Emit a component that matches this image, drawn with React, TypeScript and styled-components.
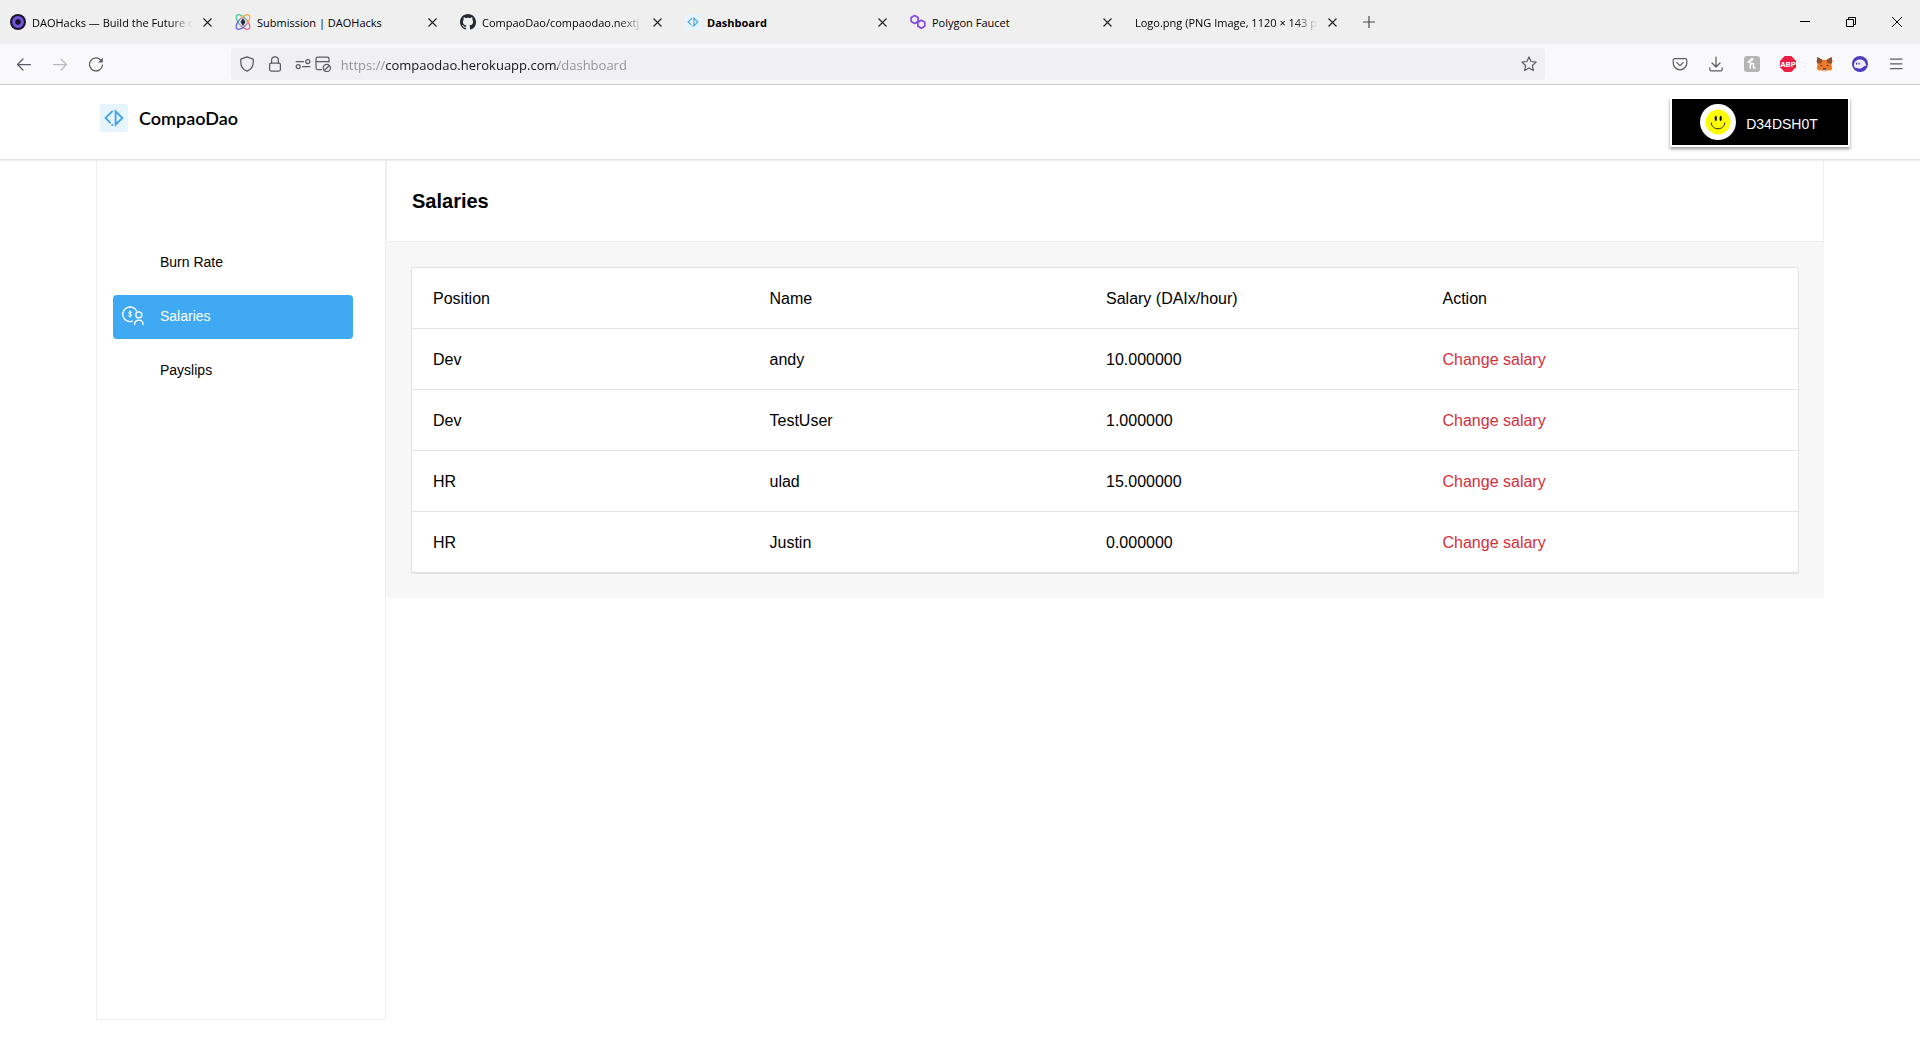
import React from "react";
import styled, { createGlobalStyle } from "styled-components";

const GlobalStyle = createGlobalStyle`
  *, *::before, *::after { box-sizing: border-box; }
  body {
    margin: 0;
    background: #fff;
    color: #000;
    font-family: "Liberation Sans", Arial, sans-serif;
  }
  button { font: inherit; color: inherit; background: none; border: 0; padding: 0; cursor: pointer; }
  a { color: inherit; text-decoration: none; }
  svg { display: block; flex: none; }
`;

const uiFont = `"Open Sans", "Noto Sans", sans-serif`;

/* ---------- Browser chrome ---------- */

const Screen = styled.div`
  display: flex;
  flex-direction: column;
  min-height: 100vh;
`;

const TabStrip = styled.div`
  display: flex;
  align-items: stretch;
  height: 44px;
  background: #efefef;
  font-family: ${uiFont};
`;

const Tab = styled.div`
  display: flex;
  align-items: center;
  gap: 6px;
  width: 225px;
  padding: 0 10px;
`;

const TabLabel = styled.span<{ $active?: boolean; $faded?: boolean }>`
  flex: 1;
  min-width: 0;
  padding-top: 2px;
  white-space: nowrap;
  font-size: 11px;
  line-height: 18px;
  font-weight: ${(p) => (p.$active ? 700 : 400)};
  mask-image: ${(p) =>
    p.$faded ? "linear-gradient(to left, transparent, #000 24px)" : "none"};
`;

const TabClose = styled.button`
  display: grid;
  place-items: center;
  width: 16px;
  height: 24px;
`;

const NewTab = styled.button`
  display: grid;
  place-items: center;
  width: 38px;
`;

const WindowControls = styled.div`
  display: flex;
  margin-left: auto;
`;

const WindowButton = styled.button`
  display: grid;
  place-items: center;
  width: 46px;
`;

const Toolbar = styled.div`
  display: flex;
  align-items: center;
  height: 41px;
  padding: 0 6px;
  background: #f9f9fb;
  border-bottom: 1px solid #cccccc;
  font-family: ${uiFont};
`;

const ToolButton = styled.button<{ $dim?: boolean }>`
  display: grid;
  place-items: center;
  width: 36px;
  height: 32px;
  color: #5b5b66;
  opacity: ${(p) => (p.$dim ? 0.4 : 1)};
`;

const Spacer = styled.div`
  flex: 9;
`;

const UrlBar = styled.form`
  display: flex;
  align-items: center;
  flex: 100;
  height: 32px;
  padding: 0 8px;
  border-radius: 4px;
  background: #f0f0f4;
  color: #5b5b66;
`;

const UrlIcons = styled.div`
  display: flex;
  align-items: center;
  gap: 12px;
  padding-right: 10px;
`;

const IconPair = styled.div`
  display: flex;
  gap: 4px;
`;

const UrlInput = styled.input`
  flex: 1;
  min-width: 0;
  border: 0;
  padding: 2px 0 0;
  outline: 0;
  font-family: ${uiFont};
  font-size: 13px;
  line-height: 20px;
  color: transparent;
  background: linear-gradient(to right, #8f8f98 44px, #15141a 44px 217px, #8f8f98 217px);
  background-clip: text;
  -webkit-background-clip: text;
`;

/* ---------- Site ---------- */

const SiteHeader = styled.header`
  display: flex;
  align-items: center;
  justify-content: space-between;
  height: 75px;
  padding: 0 70px 0 100px;
  border-bottom: 1px solid #e2e2e2;
  box-shadow: 0 1px 1px #f0f0f0;
`;

const Brand = styled.a`
  display: flex;
  align-items: center;
  gap: 11px;
  align-self: flex-start;
  padding-top: 19px;
  font-family: Lato, sans-serif;
  font-size: 18px;
  line-height: 28px;
  font-weight: 600;
`;

const UserButton = styled.button`
  display: flex;
  align-items: center;
  justify-content: center;
  gap: 10px;
  width: 180px;
  height: 50px;
  padding-right: 2px;
  border: 2px solid #fff;
  background: #000;
  color: #fff;
  font-size: 14px;
  line-height: 20px;
  box-shadow: 0 2px 3px rgba(0, 0, 0, 0.4);
`;

const UserName = styled.span`
  padding-top: 4px;
`;

const Layout = styled.div`
  display: flex;
  align-items: flex-start;
  width: 90%;
  margin: 0 auto;
`;

const Sidebar = styled.nav`
  display: flex;
  flex-direction: column;
  gap: 10px;
  width: 290px;
  min-height: calc(100vh - 180px);
  padding: 81px 32px 0 16px;
  border: 1px solid #eeeeee;
  border-top: 0;
`;

const NavItem = styled.a<{ $active?: boolean }>`
  display: grid;
  grid-template-columns: 22px 1fr;
  align-items: center;
  gap: 16px;
  height: 44px;
  padding: 0 0 2px 9px;
  border-radius: 4px;
  font-size: 14px;
  line-height: 20px;
  color: ${(p) => (p.$active ? "#fff" : "#000")};
  background: ${(p) => (p.$active ? "#40a9f3" : "transparent")};
`;

const NavIcon = styled.span`
  height: 20px;
`;

const Content = styled.main`
  flex: 1;
  min-width: 0;
`;

const TitleBar = styled.div`
  height: 82px;
  padding: 29px 25px 0;
  border: 1px solid #eeeeee;
  border-top: 0;
`;

const Title = styled.h1`
  margin: 0;
  font-size: 20px;
  line-height: 24px;
  font-weight: 700;
`;

const Panel = styled.section`
  padding: 25px;
  background: #f7f7f7;
`;

const Table = styled.table`
  display: block;
  border: 1px solid #e2e2e2;
  border-radius: 3px;
  background: #fff;
  box-shadow: 0 1px 0 #e2e2e2;
  font-size: 16px;
  line-height: 20px;
`;

const TableGroup = styled.tbody`
  display: block;
`;

const Row = styled.tr`
  display: grid;
  grid-template-columns: repeat(4, 1fr);
  padding: 21px 19px 19px 21px;
  & + &, tbody & { border-top: 1px solid #e2e2e2; }
`;

const HeadCell = styled.th`
  padding: 0;
  font-weight: 400;
  text-align: left;
`;

const Cell = styled.td`
  padding: 0;
`;

const ActionButton = styled.button`
  color: #d32f3a;
`;

/* ---------- Drawings ---------- */

const DaoHacksIcon = () => (
  <svg width="16" height="16" viewBox="0 0 16 16">
    <circle cx="8" cy="8" r="8" fill="#1b1530" />
    <circle cx="8" cy="8" r="4.3" fill="none" stroke="#6f55d9" strokeWidth="3.2" />
    <circle cx="8" cy="8" r="2.4" fill="#17102b" />
  </svg>
);

const EthGlobalIcon = () => (
  <svg width="16" height="16" viewBox="0 0 16 16" fill="none" strokeWidth="1.3">
    <circle cx="8" cy="8" r="5.2" fill="#dbe8f4" />
    <ellipse cx="8" cy="8" rx="4.200" ry="9" transform="rotate(-42 8 8)" stroke="url(#orbitA)" />
    <ellipse cx="8" cy="8" rx="4.200" ry="9" transform="rotate(42 8 8)" stroke="url(#orbitB)" />
    <path d="M8 4 10.500 8 8 12 5.500 8z" fill="#252b45" />
    <defs>
      <linearGradient id="orbitA" gradientUnits="userSpaceOnUse" x1="8" y1="0" x2="8" y2="16">
        <stop offset="0.3" stopColor="#52c79b" />
        <stop offset="0.7" stopColor="#f0629b" />
      </linearGradient>
      <linearGradient id="orbitB" gradientUnits="userSpaceOnUse" x1="8" y1="0" x2="8" y2="16">
        <stop offset="0.3" stopColor="#f5a742" />
        <stop offset="0.7" stopColor="#5969e6" />
      </linearGradient>
    </defs>
  </svg>
);

const GithubIcon = () => (
  <svg width="16" height="16" viewBox="0 0 16 16" fill="#24292f">
    <path d="M8 0C3.580 0 0 3.580 0 8c0 3.540 2.290 6.530 5.470 7.590.4.070.55-.17.55-.38 0-.19-.01-.82-.01-1.490-2.010.37-2.530-.49-2.690-.94-.09-.23-.48-.94-.82-1.130-.28-.15-.68-.52-.01-.53.63-.01 1.080.58 1.230.82.72 1.210 1.870.87 2.330.66.070-.52.28-.87.51-1.070-1.780-.2-3.640-.89-3.640-3.950 0-.87.31-1.590.82-2.150-.08-.2-.36-1.020.08-2.120 0 0 .67-.21 2.200.82.64-.18 1.320-.27 2-.27s1.360.09 2 .27c1.530-1.040 2.200-.82 2.200-.82.44 1.100.16 1.920.08 2.120.51.56.82 1.270.82 2.150 0 3.070-1.870 3.750-3.650 3.950.29.25.54.73.54 1.480 0 1.070-.01 1.930-.01 2.200 0 .21.15.46.55.38A8.010 8.010 0 0 0 16 8c0-4.420-3.580-8-8-8z" />
  </svg>
);

const BrandIcon = ({ size }: { size: number }) => (
  <svg width={size} height={size} viewBox="0 0 28 28" fill="none" stroke="#45a3ea" strokeWidth="1.900">
    <rect width="28" height="28" rx="2.500" fill="#e6f4fe" stroke="none" />
    <path d="M12.700 6.800 5.500 14l5.100 5.100" />
    <path d="M15.600 7.300v13.400L22.400 14z" />
    <path d="M11.400 21h1.800" />
  </svg>
);

const PolygonIcon = () => (
  <svg width="16" height="16" viewBox="0 0 16 16" fill="none" stroke="#8247e5" strokeWidth="1.700" strokeLinejoin="round">
    <path d="M8 7.700 4.700 9.500 1.200 7.500v-4l3.500-2 3.400 2v3.200l2 1.100" />
    <path d="M6.200 8.500 7.900 7.900l3.400-1.600 3.500 2v4l-3.500 2-3.400-2V9" />
  </svg>
);

const CloseIcon = () => (
  <svg width="9" height="9" viewBox="0 0 9 9" stroke="#222" strokeWidth="1.100">
    <path d="M.5.5l8 8M8.500.5l-8 8" />
  </svg>
);

const PlusIcon = () => (
  <svg width="12" height="12" viewBox="0 0 12 12" stroke="#4a4a4a" strokeWidth="1.200">
    <path d="M6 0v12M0 6h12" />
  </svg>
);

const MinimizeIcon = () => (
  <svg width="10" height="10" viewBox="0 0 10 10" stroke="#000"><path d="M0 4.500h10" /></svg>
);

const RestoreIcon = () => (
  <svg width="10" height="10" viewBox="0 0 10 10" stroke="#000" fill="none">
    <path d="M.5 2.500h7v7h-7z M2.500 2.500v-2h7v7h-2" />
  </svg>
);

const WindowCloseIcon = () => (
  <svg width="10" height="10" viewBox="0 0 10 10" stroke="#000"><path d="M0 0l10 10M10 0L0 10" /></svg>
);

const Stroke = ({ children }: { children: React.ReactNode }) => (
  <svg width="16" height="16" viewBox="0 0 16 16" fill="none" stroke="currentColor" strokeWidth="1.250" strokeLinecap="round" strokeLinejoin="round">
    {children}
  </svg>
);

const BackIcon = () => <Stroke><path d="M14.500 8.500h-13M7 3 1.500 8.500 7 14" /></Stroke>;
const ForwardIcon = () => <Stroke><path d="M1.500 8.500h13M9 3l5.500 5.500L9 14" /></Stroke>;
const ReloadIcon = () => (
  <Stroke>
    <path d="M14.500 9A6.500 6.500 0 1 1 12.800 4" />
    <path d="M14.800 1.800v4.700h-4.700z" fill="currentColor" stroke="none" />
  </Stroke>
);
const ShieldIcon = () => (
  <Stroke><path d="M8 .9 14.200 3.200v3.300c0 4-2.500 7.200-6.200 8.700-3.700-1.500-6.200-4.700-6.200-8.700V3.200z" /></Stroke>
);
const LockIcon = () => (
  <Stroke>
    <rect x="2.600" y="7" width="10.800" height="8" rx="1.500" />
    <path d="M4.600 7V4.200a3.400 3.400 0 0 1 6.800 0V7" />
  </Stroke>
);
const PermissionIcon = () => (
  <Stroke>
    <circle cx="12.800" cy="5.500" r="2" />
    <circle cx="3.200" cy="10.600" r="2" />
    <path d="M1.200 5.500h7.300M7.500 10.600h7.300" />
  </Stroke>
);
const BlockedIcon = () => (
  <Stroke>
    <path d="M6.500 13.500H2.800A1.800 1.800 0 0 1 1 11.700V3A1.800 1.800 0 0 1 2.800 1.200h9.400A1.800 1.800 0 0 1 14 3v3M1 5.500h13" />
    <circle cx="11.800" cy="12" r="3.600" />
    <path d="M9.500 14.300l4.600-4.600" />
  </Stroke>
);
const StarIcon = () => (
  <Stroke>
    <path d="M8 .9 10.100 5.500l5 .6-3.700 3.400 1 5L8 12l-4.400 2.500 1-5L.9 6.100l5-.6z" />
  </Stroke>
);
const PocketIcon = () => (
  <Stroke>
    <path d="M2.800 2.600h10.400A1.600 1.600 0 0 1 14.800 4.200V7a6.800 6.800 0 0 1-13.600 0V4.200a1.600 1.600 0 0 1 1.600-1.600z" />
    <path d="M4.800 6.600 8 9.600l3.200-3" />
  </Stroke>
);
const DownloadIcon = () => (
  <Stroke><path d="M8 1v9.500M4 7l4 4 4-4M1.800 11.800v1.400a1.600 1.600 0 0 0 1.600 1.600h9.200a1.600 1.600 0 0 0 1.600-1.600v-1.400" /></Stroke>
);
const MenuIcon = () => (
  <Stroke><path d="M2.500 3h11.500M2.500 7.800h11.500M2.500 12.500h11.500" /></Stroke>
);

const HoneyIcon = () => (
  <svg width="16" height="16" viewBox="0 0 16 16">
    <rect width="16" height="16" rx="3" fill="#b5b5b5" />
    <path d="M4 6.200C5.500 4.200 8.500 4.600 8.700 3.300 8.500 2.200 6.300 2.800 6.300 5v7.300M6.400 9c1-2 3.300-2.200 3.200-.2-.1 1.500-.7 3.600 1.500 3.200" fill="none" stroke="#fff" strokeWidth="1.500" strokeLinecap="round" />
  </svg>
);

const AbpIcon = () => (
  <svg width="16" height="16" viewBox="0 0 16 16">
    <path d="M4.700 0h6.600L16 4.700v6.600L11.300 16H4.700L0 11.300V4.700z" fill="#ed1e45" />
    <text x="8" y="11" textAnchor="middle" fill="#fff" fontFamily="Roboto, sans-serif" fontWeight="700" fontSize="8">ABP</text>
  </svg>
);

const FoxIcon = () => (
  <svg width="17" height="16" viewBox="0 0 18 16">
    <path d="M1.500.5 7 3.700h4L16.500.5l.8 4.500-1 4 .9 3-1.300 3-3.600-.5-1.600 1.300H7.300l-1.600-1.300-3.600.5L.8 12l.9-3-1-4z" fill="#ec7a2b" />
    <path d="M1.500.5 7 3.700 5.500 7.300l-3.800.2L.8 5zM16.500.5 11 3.700l1.500 3.600 3.800.2L17.300 5z" fill="#8f5030" />
    <path d="M5.200 8.700l2 1.300-2.400.4zM12.800 8.700l-2 1.300 2.400.4z" fill="#3b2a2a" />
    <path d="M7.300 12.600h3.400l.5 2.200-.9.600H7.700l-.9-.6z" fill="#d9c4b4" />
    <path d="M7.500 12.600h3l.3 1.200H7.200z" fill="#241d22" />
  </svg>
);

const PhantomIcon = () => (
  <svg width="16" height="16" viewBox="0 0 16 16">
    <circle cx="8" cy="8" r="8" fill="#4b3bbd" />
    <path d="M2 9.400C1.800 5.800 4.500 3.600 7.800 3.600c3.400 0 5.800 2 5.900 5 .8.100.8 1.200-.1 1.400-.9.200-1.500 0-1.900.4-.9 1.200-2.400 2.100-4.600 2.100-1.300 0-1.500-.6-2.300-.6C3.200 11.900 2 11.300 2 9.400z" fill="#efeaff" />
    <ellipse cx="4.600" cy="7.600" rx=".6" ry="1.200" fill="#3a2ca8" />
    <ellipse cx="7" cy="7.600" rx=".6" ry="1.200" fill="#3a2ca8" />
  </svg>
);

const SmileyAvatar = () => (
  <svg width="36" height="36" viewBox="0 0 36 36">
    <circle cx="18" cy="18" r="18" fill="#fff" />
    <circle cx="18" cy="18" r="12.500" fill="#ffff00" />
    <ellipse cx="15.800" cy="14.400" rx="1.100" ry="2.600" />
    <ellipse cx="20.700" cy="14.400" rx="1.100" ry="2.600" />
    <path d="M11.200 18.500c.4 8.400 13.200 8.400 13.600 0" fill="none" stroke="#222" strokeWidth="1" />
  </svg>
);

const SalaryIcon = () => (
  <svg width="22" height="20" viewBox="0 0 22 20" fill="none" stroke="#fff" strokeWidth="1.400" strokeLinecap="round">
    <path d="M10.500 15.200A7.300 7.300 0 1 1 14.600 5" />
    <path d="M9.700 6.300C9.100 5.400 6.700 5.500 6.700 6.900c0 1.500 3 .9 3 2.500 0 1.500-2.500 1.400-3.200.4M8.200 4.800v6.400" strokeWidth="1" />
    <circle cx="16.800" cy="8.900" r="3" />
    <path d="M12.600 18.500c.2-5.800 8.200-5.800 8.500 0" />
  </svg>
);

/* ---------- Data ---------- */

const tabs = [
  { label: "DAOHacks — Build the Future o", icon: <DaoHacksIcon />, faded: true },
  { label: "Submission | DAOHacks", icon: <EthGlobalIcon /> },
  { label: "CompaoDao/compaodao.nextj", icon: <GithubIcon />, faded: true },
  { label: "Dashboard", icon: <BrandIcon size={16} />, active: true },
  { label: "Polygon Faucet", icon: <PolygonIcon /> },
  { label: "Logo.png (PNG Image, 1120 × 143 p", faded: true },
];

const extensions = [
  { name: "Save to Pocket", icon: <PocketIcon /> },
  { name: "Downloads", icon: <DownloadIcon /> },
  { name: "Honey", icon: <HoneyIcon /> },
  { name: "Adblock Plus", icon: <AbpIcon /> },
  { name: "MetaMask", icon: <FoxIcon /> },
  { name: "Phantom", icon: <PhantomIcon /> },
  { name: "Menu", icon: <MenuIcon /> },
];

const navItems = [
  { label: "Burn Rate" },
  { label: "Salaries", icon: <SalaryIcon />, active: true },
  { label: "Payslips" },
];

const columns = ["Position", "Name", "Salary (DAIx/hour)", "Action"];

const employees = [
  { position: "Dev", name: "andy", salary: "10.000000" },
  { position: "Dev", name: "TestUser", salary: "1.000000" },
  { position: "HR", name: "ulad", salary: "15.000000" },
  { position: "HR", name: "Justin", salary: "0.000000" },
];

export default function App() {
  return (
    <Screen>
      <GlobalStyle />
      <TabStrip>
        {tabs.map((tab) => (
          <Tab key={tab.label}>
            {tab.icon}
            <TabLabel $active={tab.active} $faded={tab.faded}>{tab.label}</TabLabel>
            <TabClose aria-label="Close tab"><CloseIcon /></TabClose>
          </Tab>
        ))}
        <NewTab aria-label="New tab"><PlusIcon /></NewTab>
        <WindowControls>
          <WindowButton aria-label="Minimize"><MinimizeIcon /></WindowButton>
          <WindowButton aria-label="Restore"><RestoreIcon /></WindowButton>
          <WindowButton aria-label="Close"><WindowCloseIcon /></WindowButton>
        </WindowControls>
      </TabStrip>

      <Toolbar>
        <ToolButton aria-label="Back"><BackIcon /></ToolButton>
        <ToolButton aria-label="Forward" $dim><ForwardIcon /></ToolButton>
        <ToolButton aria-label="Reload"><ReloadIcon /></ToolButton>
        <Spacer />
        <UrlBar onSubmit={(e) => e.preventDefault()}>
          <UrlIcons>
            <ShieldIcon />
            <LockIcon />
            <IconPair>
              <PermissionIcon />
              <BlockedIcon />
            </IconPair>
          </UrlIcons>
          <UrlInput aria-label="Address" defaultValue="https://compaodao.herokuapp.com/dashboard" />
          <button type="button" aria-label="Bookmark this page"><StarIcon /></button>
        </UrlBar>
        <Spacer />
        {extensions.map((ext) => (
          <ToolButton key={ext.name} aria-label={ext.name}>{ext.icon}</ToolButton>
        ))}
      </Toolbar>

      <SiteHeader>
        <Brand href="#">
          <BrandIcon size={28} />
          CompaoDao
        </Brand>
        <UserButton>
          <SmileyAvatar />
          <UserName>D34DSH0T</UserName>
        </UserButton>
      </SiteHeader>

      <Layout>
        <Sidebar>
          {navItems.map((item) => (
            <NavItem key={item.label} href="#" $active={item.active}>
              <NavIcon>{item.icon}</NavIcon>
              {item.label}
            </NavItem>
          ))}
        </Sidebar>
        <Content>
          <TitleBar><Title>Salaries</Title></TitleBar>
          <Panel>
            <Table>
              <TableGroup as="thead">
                <Row>
                  {columns.map((c) => <HeadCell key={c} scope="col">{c}</HeadCell>)}
                </Row>
              </TableGroup>
              <TableGroup>
                {employees.map((e) => (
                  <Row key={e.name}>
                    <Cell>{e.position}</Cell>
                    <Cell>{e.name}</Cell>
                    <Cell>{e.salary}</Cell>
                    <Cell><ActionButton>Change salary</ActionButton></Cell>
                  </Row>
                ))}
              </TableGroup>
            </Table>
          </Panel>
        </Content>
      </Layout>
    </Screen>
  );
}
